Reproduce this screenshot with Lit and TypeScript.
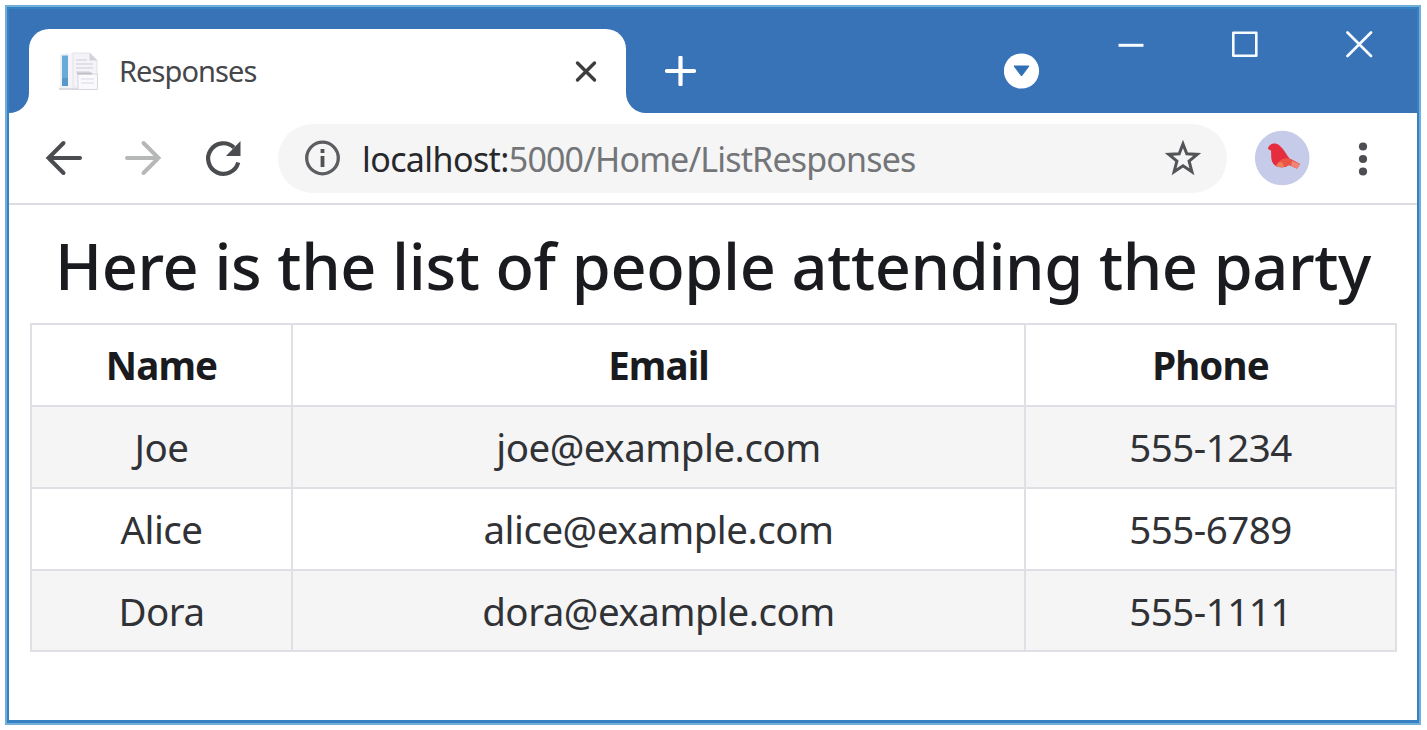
import { LitElement, html, css } from "lit";
import { customElement } from "lit/decorators.js";

const reset = css`
  :host { display: block; box-sizing: border-box; }
  * { box-sizing: border-box; }
  svg { display: block; flex: none; }
`;

@customElement("title-bar")
class TitleBar extends LitElement {
  static styles = [reset, css`
    :host { background: #3873b7; height: 104px; display: flex; align-items: flex-end; }
    .tab { position: relative; height: 84px; width: 597px; margin-left: 20px; flex: none; background: #fff; border-radius: 20px 20px 0 0; display: flex; align-items: center; padding: 0 27px 0 30px; }
    .foot { position: absolute; bottom: 0; }
    .foot.left { left: -20px; }
    .foot.right { right: -20px; }
    .title { flex: 1; margin-left: 20px; font-size: 29px; letter-spacing: -0.93px; color: #45474b; line-height: 40px; white-space: nowrap; }
    .plus { margin: 0 0 27px 39px; }
    .down { margin: 0 0 24px 308px; }
    .controls { align-self: flex-start; margin: 22px 0 0 77px; display: flex; gap: 86px; }
  `];
  render() {
    return html`
      <div class="tab">
        <svg class="foot left" width="20" height="20"><path d="M20 0A20 20 0 0 1 0 20H20Z" fill="#fff"/></svg>
        <svg width="40" height="40" viewBox="0 0 40 40">
          <path d="M1 3.500L9 2V38H1Z" fill="#edf1f6"/>
          <path d="M3 4.500H9V35H3Z" fill="#6aaad8"/>
          <path d="M3 27H9V35H3Z" fill="#5897cb"/>
          <path d="M9 3L16 1V37H9Z" fill="#f5f5f9"/>
          <path d="M0 37H20V39H0Z" fill="#ddd9e2"/>
          <path d="M14 2H31L38 9V36H14Z" fill="#f4f3f7" stroke="#e4e2e9"/>
          <path d="M30.500 2V9.500H38Z" fill="#d2d1d8"/>
          <path d="M17 9H28M17 13H34M17 17H34M17 21H31" stroke="#dadae1" stroke-width="1.500"/>
          <path d="M19 23H38.500V38.500H19Z" fill="#faf9fc" stroke="#d8d6df"/>
          <path d="M18 22.500H33" stroke="#c2c1c9" stroke-width="2"/>
          <path d="M22 28H35M22 32H35" stroke="#e4e3ea" stroke-width="1.500"/>
        </svg>
        <span class="title">Responses</span>
        <svg width="26" height="26" viewBox="0 0 26 26"><path d="M4.500 5L21.500 22M21.500 5L4.500 22" stroke="#3d3d3d" stroke-width="3.400" stroke-linecap="round"/></svg>
        <svg class="foot right" width="20" height="20"><path d="M0 0A20 20 0 0 0 20 20H0Z" fill="#fff"/></svg>
      </div>
      <svg class="plus" width="31" height="30"><path d="M2 15H29M15.500 1.500V28.500" stroke="#fff" stroke-width="4.200" stroke-linecap="round"/></svg>
      <svg class="down" width="36" height="36"><circle cx="17.500" cy="18" r="17.600" fill="#fff"/><path d="M10 13H25L17.500 23Z" fill="#3070b5" stroke="#3070b5" stroke-linejoin="round"/></svg>
      <div class="controls">
        <svg width="28" height="28"><path d="M1.500 14.300H26.500" stroke="#f5fbff" stroke-width="3"/></svg>
        <svg width="28" height="28"><rect x="2.300" y="1.800" width="23" height="23" fill="none" stroke="#f5fbff" stroke-width="2.600" stroke-linejoin="round"/></svg>
        <svg width="28" height="28"><path d="M2.500 1.500L26 25M26 1.500L2.500 25" stroke="#f5fbff" stroke-width="2.700" stroke-linecap="round"/></svg>
      </div>`;
  }
}

@customElement("tool-bar")
class ToolBar extends LitElement {
  static styles = [reset, css`
    :host { height: 92px; border-bottom: 2px solid #dcdde0; background: #fff; display: flex; align-items: center; padding-left: 34px; }
    .nav { display: flex; gap: 40px; }
    .address { width: 949px; height: 69px; margin-left: 35px; border-radius: 35px; background: #f5f5f5; display: flex; align-items: center; padding: 0 24px 0 26px; flex: none; }
    .url { flex: 1; margin-left: 20px; padding-top: 2px; font-size: 34px; line-height: 48px; letter-spacing: -0.83px; color: #737578; white-space: nowrap; }
    .host { color: #26282b; letter-spacing: -0.6px; }
    .profile { margin-left: 27px; }
    .menu { margin-left: 45px; }
  `];
  render() {
    return html`
      <div class="nav">
        <svg width="40" height="40" viewBox="0 0 40 40"><path d="M37 20H5.500M20.500 5L5.500 20L20.500 35" fill="none" stroke="#4a4c50" stroke-width="4" stroke-linecap="round"/></svg>
        <svg width="40" height="40" viewBox="0 0 40 40"><path d="M4 20H35.500M20.500 5L35.500 20L20.500 35" fill="none" stroke="#b6b8b8" stroke-width="4" stroke-linecap="round"/></svg>
        <svg width="40" height="40" viewBox="0 0 40 40"><path d="M35.200 24.500A15.300 15.300 0 1 1 31 9.500" fill="none" stroke="#4a4c50" stroke-width="4.200"/><path d="M37.500 3V18H23Z" fill="#4a4c50"/></svg>
      </div>
      <div class="address">
        <svg width="38" height="38" viewBox="0 0 38 38"><circle cx="18.500" cy="19" r="15.800" fill="none" stroke="#5b5d61" stroke-width="3.300"/><path d="M18.500 17V28M18.500 10V14" stroke="#4f5155" stroke-width="3.800"/></svg>
        <span class="url"><span class="host">localhost:</span>5000/Home/ListResponses</span>
        <svg width="40" height="40" viewBox="0 0 40 40"><path d="M20 6L23.800 15.800L34.300 16.400L26.100 23.100L28.900 33.700L20 27.800L11.100 33.700L13.900 23.100L5.700 16.400L16.200 15.800Z" fill="none" stroke="#525458" stroke-width="3"/></svg>
      </div>
      <svg class="profile" width="56" height="56" viewBox="0 0 56 56">
        <circle cx="28.200" cy="28" r="27.300" fill="#c5cbe8"/>
        <path d="M14 19C14 14 21 11.500 25.500 15.500C30 19.500 32 24 35.500 28.500L46 34L43 38.500L35 35C31 38 23 38.500 19.500 34C16.500 30 17.500 25 17 20.500Z" fill="#e52d3d"/>
        <path d="M24 33C26 29 31 27.500 35.500 28.500L46 34L43 38.500L35 35C31 37.500 26 38 22 36Z" fill="#ec5545"/>
        <path d="M24 33C27 31 29 32 30 36.800C27.500 37.500 24.500 37.300 22 36Z" fill="#f27b58"/>
        <path d="M38 31L46 34L43 38.500L37 36Z" fill="#ef8577"/>
      </svg>
      <svg class="menu" width="16" height="40" viewBox="0 0 16 40"><g fill="#4c4e52"><circle cx="8" cy="8.500" r="4.100"/><circle cx="8" cy="21" r="4.100"/><circle cx="8" cy="33.500" r="4.100"/></g></svg>`;
  }
}

const guests = [
  { name: "Joe", email: "joe@example.com", phone: "555-1234" },
  { name: "Alice", email: "alice@example.com", phone: "555-6789" },
  { name: "Dora", email: "dora@example.com", phone: "555-1111" },
];

@customElement("guest-list")
class GuestList extends LitElement {
  static styles = [reset, css`
    :host { padding: 23px 21px 0; color: #1a1b1f; }
    h2 { margin: 0; font-size: 63px; font-weight: 500; letter-spacing: -0.36px; line-height: 76px; text-align: center; white-space: nowrap; }
    .table { margin-top: 19px; width: 1367px; background: #dfdfe5; padding: 2px; display: grid; gap: 2px; grid-template-columns: 259px 731px 369px; grid-template-rows: 80px 80px 80px 79px; }
    .cell { background: #fff; font-size: 38.500px; letter-spacing: -0.5px; display: flex; align-items: center; justify-content: center; line-height: 56px; color: #303236; }
    .head { font-weight: 700; color: #1a1b1f; letter-spacing: -0.9px; }
    .odd { background: #f5f5f5; }
  `];
  render() {
    return html`
      <h2>Here is the list of people attending the party</h2>
      <div class="table">
        ${["Name", "Email", "Phone"].map((t) => html`<div class="cell head">${t}</div>`)}
        ${guests.map((g, i) => [g.name, g.email, g.phone].map((t) => html`<div class="cell ${i % 2 ? "" : "odd"}">${t}</div>`))}
      </div>`;
  }
}

@customElement("app-root")
class AppRoot extends LitElement {
  static styles = [reset, css`
    :host { width: 1427px; height: 730px; padding: 5px 6px 5px 5px; background: #fff; font-family: "Noto Sans", "Open Sans", sans-serif; overflow: hidden; }
    .window { height: 720px; border: 2px solid #72aeda; background: #fff; }
    .frame { height: 716px; border: solid #3681c2; border-width: 2px 2px 3px; }
  `];
  render() {
    return html`<div class="window"><div class="frame">
      <title-bar></title-bar><tool-bar></tool-bar><guest-list></guest-list>
    </div></div>`;
  }
}
